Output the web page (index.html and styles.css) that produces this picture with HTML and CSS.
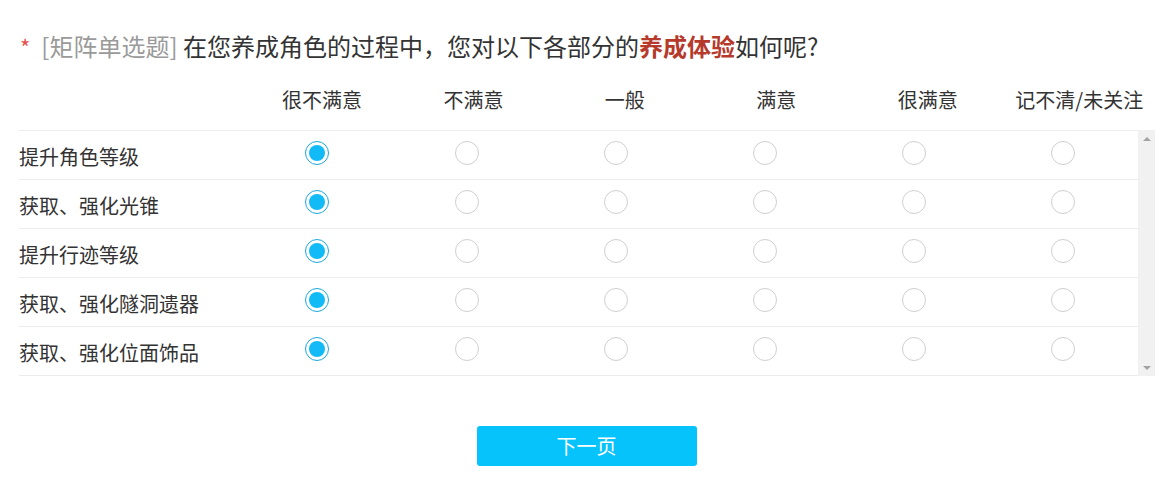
FILE: index.html
```html
<!DOCTYPE html>
<html lang="zh-CN">
<head>
<meta charset="utf-8">
<title>矩阵单选题</title>
<link rel="stylesheet" href="styles.css">
</head>
<body>
<div class="page">
  <h2 class="title"><span class="req">*</span><span class="type">[矩阵单选题]</span> 在您养成角色的过程中，您对以下各部分的<b class="hl">养成体验</b>如何呢?</h2>
  <div class="matrix">
    <div class="head grid">
      <div></div>
      <div class="col">很不满意</div>
      <div class="col">不满意</div>
      <div class="col">一般</div>
      <div class="col">满意</div>
      <div class="col">很满意</div>
      <div class="col">记不清/未关注</div>
    </div>
    <div class="bodywrap">
      <div class="rows">
        <div class="row grid">
          <div class="label">提升角色等级</div>
          <div class="cell"><span class="radio on"></span></div>
          <div class="cell"><span class="radio"></span></div>
          <div class="cell"><span class="radio"></span></div>
          <div class="cell"><span class="radio"></span></div>
          <div class="cell"><span class="radio"></span></div>
          <div class="cell"><span class="radio"></span></div>
        </div>
        <div class="row grid">
          <div class="label">获取、强化光锥</div>
          <div class="cell"><span class="radio on"></span></div>
          <div class="cell"><span class="radio"></span></div>
          <div class="cell"><span class="radio"></span></div>
          <div class="cell"><span class="radio"></span></div>
          <div class="cell"><span class="radio"></span></div>
          <div class="cell"><span class="radio"></span></div>
        </div>
        <div class="row grid">
          <div class="label">提升行迹等级</div>
          <div class="cell"><span class="radio on"></span></div>
          <div class="cell"><span class="radio"></span></div>
          <div class="cell"><span class="radio"></span></div>
          <div class="cell"><span class="radio"></span></div>
          <div class="cell"><span class="radio"></span></div>
          <div class="cell"><span class="radio"></span></div>
        </div>
        <div class="row grid">
          <div class="label">获取、强化隧洞遗器</div>
          <div class="cell"><span class="radio on"></span></div>
          <div class="cell"><span class="radio"></span></div>
          <div class="cell"><span class="radio"></span></div>
          <div class="cell"><span class="radio"></span></div>
          <div class="cell"><span class="radio"></span></div>
          <div class="cell"><span class="radio"></span></div>
        </div>
        <div class="row grid last">
          <div class="label">获取、强化位面饰品</div>
          <div class="cell"><span class="radio on"></span></div>
          <div class="cell"><span class="radio"></span></div>
          <div class="cell"><span class="radio"></span></div>
          <div class="cell"><span class="radio"></span></div>
          <div class="cell"><span class="radio"></span></div>
          <div class="cell"><span class="radio"></span></div>
        </div>
      </div>
      <div class="scrollbar">
        <span class="arrow up"></span>
        <span class="arrow down"></span>
      </div>
    </div>
  </div>
  <div class="actions"><button class="next" type="button">下一页</button></div>
</div>
</body>
</html>
```

FILE: styles.css
```css
html, body {
  margin: 0;
  padding: 0;
  background: #fff;
}
body {
  font-family: "Noto Sans CJK SC", "Noto Sans", "Liberation Sans", sans-serif;
  color: #333;
}
.page {
  width: 1136px;
  padding: 28px 0 0 19px;
}
.title {
  margin: 0;
  font-size: 24px;
  font-weight: normal;
  line-height: 36px;
  height: 36px;
  white-space: nowrap;
  color: #333;
}
.req {
  color: #e5524a;
  font-size: 22px;
  margin-left: 1px;
  margin-right: 11px;
}
.type {
  color: #9a9a9a;
}
.hl {
  color: #b63a2c;
  font-weight: bold;
}
.grid {
  display: grid;
  grid-template-columns: 20% repeat(6, 1fr);
}
.head {
  height: 66px;
  box-sizing: border-box;
  padding-top: 21px;
  font-size: 20px;
  line-height: 30px;
}
.head .col {
  text-align: center;
  white-space: nowrap;
}
.bodywrap {
  display: flex;
}
.rows {
  flex: 1;
}
.row {
  height: 49px;
  box-sizing: border-box;
  border-top: 1px solid #ececec;
  align-items: center;
}
.row.last {
  height: 50px;
  border-bottom: 1px solid #ececec;
}
.label {
  font-size: 20px;
  line-height: 30px;
  padding-top: 3px;
  white-space: nowrap;
}
.cell {
  display: flex;
  justify-content: center;
  align-items: center;
}
.radio {
  display: block;
  width: 22px;
  height: 22px;
  border: 1px solid #cfcfcf;
  border-radius: 50%;
  background: #fff;
  position: relative;
  margin-top: -4px;
}
.radio.on {
  border-color: #1aa8dc;
}
.radio.on::after {
  content: "";
  position: absolute;
  left: 3px;
  top: 3px;
  width: 16px;
  height: 16px;
  border-radius: 50%;
  background: #12bbf6;
}
.scrollbar {
  width: 17px;
  height: 246px;
  background: #f1f1f1;
  display: flex;
  flex-direction: column;
  justify-content: space-between;
  align-items: center;
  padding: 7px 0 6px;
  box-sizing: border-box;
}
.arrow {
  width: 0;
  height: 0;
  border-left: 4px solid transparent;
  border-right: 4px solid transparent;
}
.arrow.up {
  border-bottom: 4px solid #a3a3a3;
}
.arrow.down {
  border-top: 4px solid #a3a3a3;
}
.actions {
  display: flex;
  justify-content: center;
  padding-top: 50px;
}
.next {
  width: 220px;
  height: 40px;
  border: 0;
  border-radius: 3px;
  background: #06c3fc;
  color: #fff;
  font-family: "Noto Sans CJK SC", "Noto Sans", sans-serif;
  font-size: 20px;
  line-height: 40px;
  padding: 0;
  margin-left: -1px;
}
```
